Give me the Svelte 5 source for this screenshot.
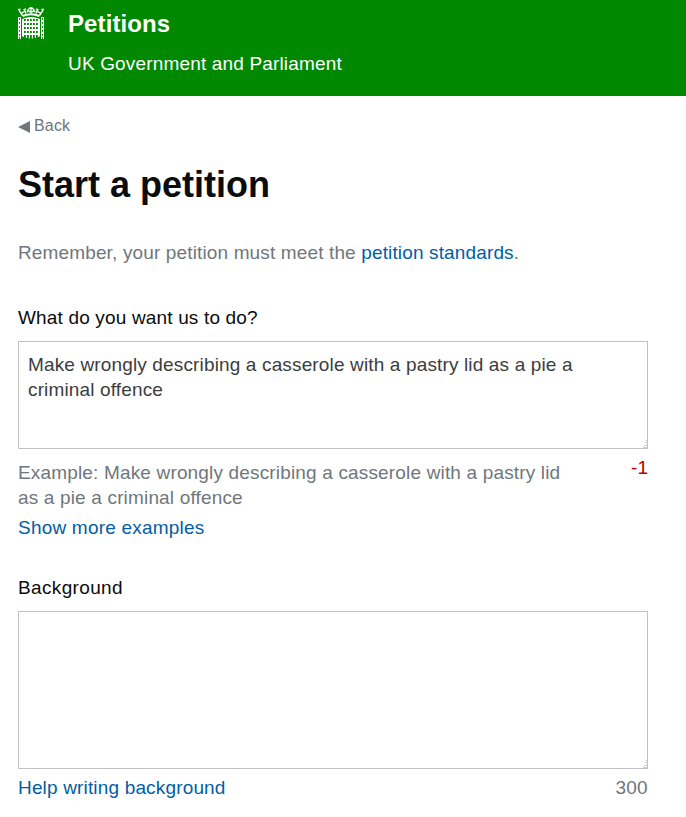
<script>
  let action = $state('Make wrongly describing a casserole with a pastry lid as a pie a\ncriminal offence');
  let background = $state('');
  const holeX = [6, 9, 12, 15, 18];
  const holeY = [12, 16, 20, 24];
  const linkY = [11, 15, 19, 23, 27, 30];
</script>

{#snippet grip()}
  <svg class="grip" width="4" height="8" viewBox="0 0 4 8" shape-rendering="crispEdges" aria-hidden="true">
    <path d="M3 0h1v1H3zM2 2h2v1H2zM1 5h3v1H1zM0 7h4v1H0z" fill="#c9cbcc" />
  </svg>
{/snippet}

<header>
  <svg class="logo" width="26" height="32" viewBox="0 0 26 32" fill="none" stroke="#fff" aria-hidden="true">
    <path d="M4.5 9Q13 5.6 21.5 9" stroke-width="2" />
    <path d="M4.5 8.5 1 3.4M21.5 8.5 25 3.4M0 2.5h2.6M23.4 2.5H26M3.5 6.2 6.5 4.5M22.5 6.2 19.5 4.5M6.2 2 8 6.5M19.8 2 18 6.5M5.5 2.8 8 2M20.5 2.8 18 2M9 5.2l2-3.6M17 5.2l-2-3.6M9.2 3.5l3.8 1.7 3.8-1.7M13 0v5.5M11 1.2h4" stroke-width="1.4" />
    <path d="M0 10h3v22H0zM23 10h3v22h-3z" fill="#fff" stroke="none" />
    {#each linkY as y}
      <path d="M1 {y}h1v1.7H1zM24 {y}h1v1.7h-1z" fill="#008800" stroke="none" />
    {/each}
    <path d="M4 12Q13 8 22 12V29l-2 1.2-1.2.8h-1.4l-1.6.6h-5.6l-1.6-.6H7.2L6 30.2 4 29z" fill="#fff" stroke="none" />
    {#each holeX as x}
      {#each holeY as y}
        <rect {x} {y} width="1.8" height="2" fill="#008800" stroke="none" />
      {/each}
      <rect {x} y="28" width="1.8" height="4" fill="#008800" stroke="none" />
    {/each}
  </svg>
  <div class="brand">
    <div class="title">Petitions</div>
    <div class="sub">UK Government and Parliament</div>
  </div>
</header>
<main>
  <a class="back" href="#back"><svg width="12" height="12" viewBox="0 0 12 12" aria-hidden="true"><path d="M0 6 12 0v12z" fill="#6f777b" /></svg><span>Back</span></a>
  <h1>Start a petition</h1>
  <p class="remember">Remember, your petition must meet the <a href="#standards">petition standards</a>.</p>
  <label for="action">What do you want us to do?</label>
  <div class="field">
    <textarea id="action" class="short" bind:value={action}></textarea>
    {@render grip()}
  </div>
  <div class="help">
    <p class="example">Example: Make wrongly describing a casserole with a pastry lid<br />as a pie a criminal offence</p>
    <span class="count over">-1</span>
  </div>
  <a class="more" href="#examples">Show more examples</a>
  <label for="background">Background</label>
  <div class="field">
    <textarea id="background" class="tall" bind:value={background}></textarea>
    {@render grip()}
  </div>
  <div class="foot">
    <a href="#help">Help writing background</a>
    <span class="count">300</span>
  </div>
</main>

<style>
  :global(body) { margin: 0; background: #fff; overflow: hidden; }
  header, main { font: 19px/25px "Liberation Sans", Arial, sans-serif; letter-spacing: 0.163px; }
  header { box-sizing: border-box; height: 96px; background: #008800; color: #fff; display: flex; padding: 7px 18px 0; gap: 24px; }
  .logo { flex: none; }
  .brand { padding-top: 2px; }
  .title { font-size: 24px; line-height: 30px; font-weight: 700; letter-spacing: 0.1px; }
  .sub { margin-top: 12px; }
  main { box-sizing: border-box; height: 721px; padding: 20px 38px 0 18px; color: #0b0c0c; display: flex; flex-direction: column; align-items: stretch; white-space: nowrap; }
  a { color: #005ea5; text-decoration: none; }
  .back { font-size: 16px; line-height: 20px; color: #6f777b; display: flex; gap: 4px; }
  .back svg { margin-top: 5px; }
  h1 { margin: 29px 0 0; font-size: 36px; line-height: 40px; font-weight: 700; letter-spacing: 0; }
  p { margin: 0; color: #6f777b; }
  .remember { margin-top: 35px; letter-spacing: 0.14px; }
  label { display: block; margin-top: 40px; }
  .more { letter-spacing: 0.21px; }
  .more + label { margin-top: 35px; letter-spacing: 0.35px; }
  .field { position: relative; margin-top: 11px; display: flex; }
  textarea { box-sizing: border-box; width: 630px; border: 1px solid #bfc1c3; border-radius: 0; margin: 0; padding: 10px 9px; resize: none; overflow: hidden; outline: 0; font: inherit; letter-spacing: 0.145px; color: #3b3d3e; background: #fff; }
  .short { height: 108px; }
  .tall { height: 158px; }
  .grip { position: absolute; right: 1px; bottom: 1px; }
  .help { display: flex; justify-content: space-between; padding-top: 6px; }
  .example { margin-top: 5px; }
  .more { margin-top: 5px; }
  .count { color: #6f777b; letter-spacing: 0.3px; }
  .over { color: #b90000; letter-spacing: 0; }
  .foot { display: flex; justify-content: space-between; margin-top: 6px; }
</style>
